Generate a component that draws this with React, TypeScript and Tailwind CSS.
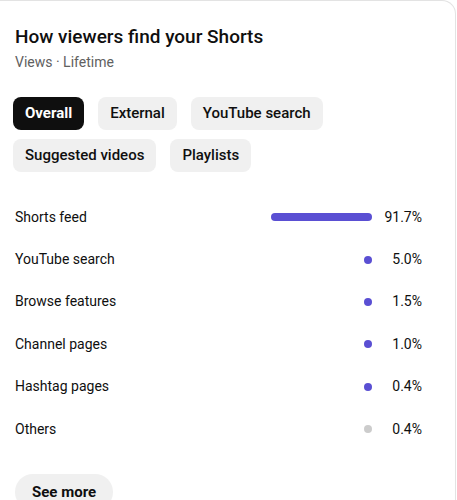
import React from "react";

const rows = [
  { label: "Shorts feed", pct: 91.7, color: "bg-[#5a4fd3]" },
  { label: "YouTube search", pct: 5.0, color: "bg-[#5a4fd3]" },
  { label: "Browse features", pct: 1.5, color: "bg-[#5a4fd3]" },
  { label: "Channel pages", pct: 1.0, color: "bg-[#5a4fd3]" },
  { label: "Hashtag pages", pct: 0.4, color: "bg-[#5a4fd3]" },
  { label: "Others", pct: 0.4, color: "bg-[#cccccc]" },
];

const chips = [
  ["Overall", "External", "YouTube search"],
  ["Suggested videos", "Playlists"],
];

export default function App() {
  return (
    <div
      className="w-[457px] h-[500px] overflow-hidden bg-white"
      style={{ fontFamily: "Roboto, 'Liberation Sans', sans-serif" }}
    >
      <div className="w-[456px] h-[540px] bg-white border-t border-r border-[#e3e3e3] rounded-tr-[14px] pl-[15px] pr-[33px] pt-[22px] text-[#0f0f0f]">
        <h1 className="text-[19px] leading-[28px] font-medium">How viewers find your Shorts</h1>
        <div className="text-[14px] leading-[20px] text-[#606060] mt-[1px]">Views · Lifetime</div>

        <div className="mt-[25px] flex flex-col gap-[9px]">
          {chips.map((row, i) => (
            <div key={i} className="flex gap-[14px] -ml-[2px]">
              {row.map((c) => (
                <div
                  key={c}
                  className={
                    c === "Overall"
                      ? "h-[33px] px-[12px] rounded-[8px] flex items-center text-[15px] font-bold bg-[#0f0f0f] text-white"
                      : "h-[33px] px-[12px] rounded-[8px] flex items-center text-[15px] font-medium bg-[#f0f0f0] text-[#0f0f0f]"
                  }
                >
                  {c}
                </div>
              ))}
            </div>
          ))}
        </div>

        <div className="mt-[24px] flex flex-col">
          {rows.map((r) => (
            <div key={r.label} className="h-[42.4px] flex items-center text-[14px]">
              <div className="flex-1">{r.label}</div>
              <div className="w-[110px] flex justify-end">
                <div
                  className={`h-[8px] rounded-full ${r.color}`}
                  style={{ width: `${Math.max(8, (r.pct / 100) * 110)}px` }}
                />
              </div>
              <div className="w-[50px] text-right">{r.pct.toFixed(1)}%</div>
            </div>
          ))}
        </div>

        <button className="mt-[24px] h-[36px] px-[17px] rounded-full bg-[#f0f0f0] text-[15px] font-bold text-[#0f0f0f]">
          See more
        </button>
      </div>
    </div>
  );
}
